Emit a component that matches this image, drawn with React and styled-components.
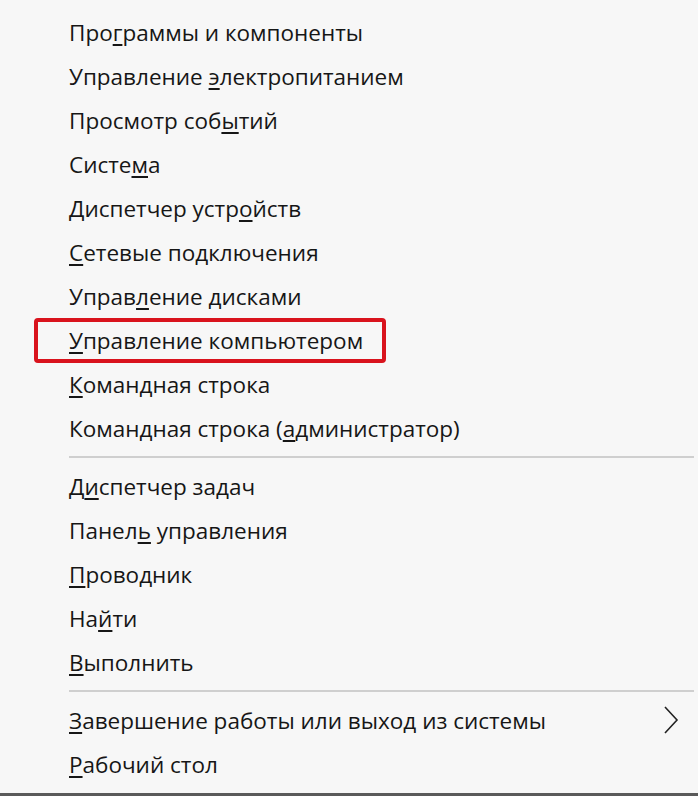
import React from 'react'
import styled, { createGlobalStyle } from 'styled-components'

const GlobalStyle = createGlobalStyle`
  html, body {
    margin: 0;
    padding: 0;
    background: #f7f7f7;
  }
`

const Menu = styled.nav`
  box-sizing: border-box;
  min-height: 796px;
  padding: 10px 4px 0 69px;
  border-bottom: 3px solid #5a5a5a;
  font-family: 'Open Sans', 'Noto Sans', sans-serif;
  font-size: 22.5px;
  color: #161616;
`

const Item = styled.div`
  position: relative;
  display: flex;
  align-items: center;
  justify-content: space-between;
  height: 44px;
  white-space: nowrap;

  &::after {
    content: '';
    display: ${(p) => (p.$marked ? 'block' : 'none')};
    position: absolute;
    left: -35px;
    top: 0;
    width: 352px;
    height: 45px;
    box-sizing: border-box;
    border: 4px solid #d9131d;
    border-radius: 4px;
  }
`

const Key = styled.span`
  text-decoration: underline;
  text-decoration-thickness: 2px;
  text-underline-offset: 3px;
`

const Separator = styled.div`
  height: 14px;
  display: flex;
  align-items: center;

  &::before {
    content: '';
    flex: 1;
    height: 2px;
    background: #cfcfcf;
  }
`

const Chevron = styled.svg`
  width: 16px;
  height: 28px;
  margin-right: 15px;
`

const groups = [
  [
    ['Про', 'г', 'раммы и компоненты'],
    ['Управление ', 'э', 'лектропитанием'],
    ['Просмотр соб', 'ы', 'тий'],
    ['Систе', 'м', 'а'],
    ['Диспетчер устр', 'о', 'йств'],
    ['', 'С', 'етевые подключения'],
    ['Управ', 'л', 'ение дисками'],
    ['', 'У', 'правление компьютером', { marked: true }],
    ['', 'К', 'омандная строка'],
    ['Командная строка (', 'а', 'дминистратор)'],
  ],
  [
    ['Д', 'и', 'спетчер задач'],
    ['Панел', 'ь', ' управления'],
    ['', 'П', 'роводник'],
    ['На', 'й', 'ти'],
    ['', 'В', 'ыполнить'],
  ],
  [
    ['', 'З', 'авершение работы или выход из системы', { sub: true }],
    ['', 'Р', 'абочий стол'],
  ],
]

export default function App() {
  return (
    <>
      <GlobalStyle />
      <Menu>
        {groups.map((group, gi) => (
          <React.Fragment key={gi}>
            {gi > 0 && <Separator />}
            {group.map(([before, key, after, opts = {}], i) => (
              <Item key={i} $marked={opts.marked}>
                <span>
                  {before}
                  <Key>{key}</Key>
                  {after}
                </span>
                {opts.sub && (
                  <Chevron viewBox="0 0 16 28">
                    <path d="M2 1 L14 14 L2 27" fill="none" stroke="#222" strokeWidth="1.6" />
                  </Chevron>
                )}
              </Item>
            ))}
          </React.Fragment>
        ))}
      </Menu>
    </>
  )
}
